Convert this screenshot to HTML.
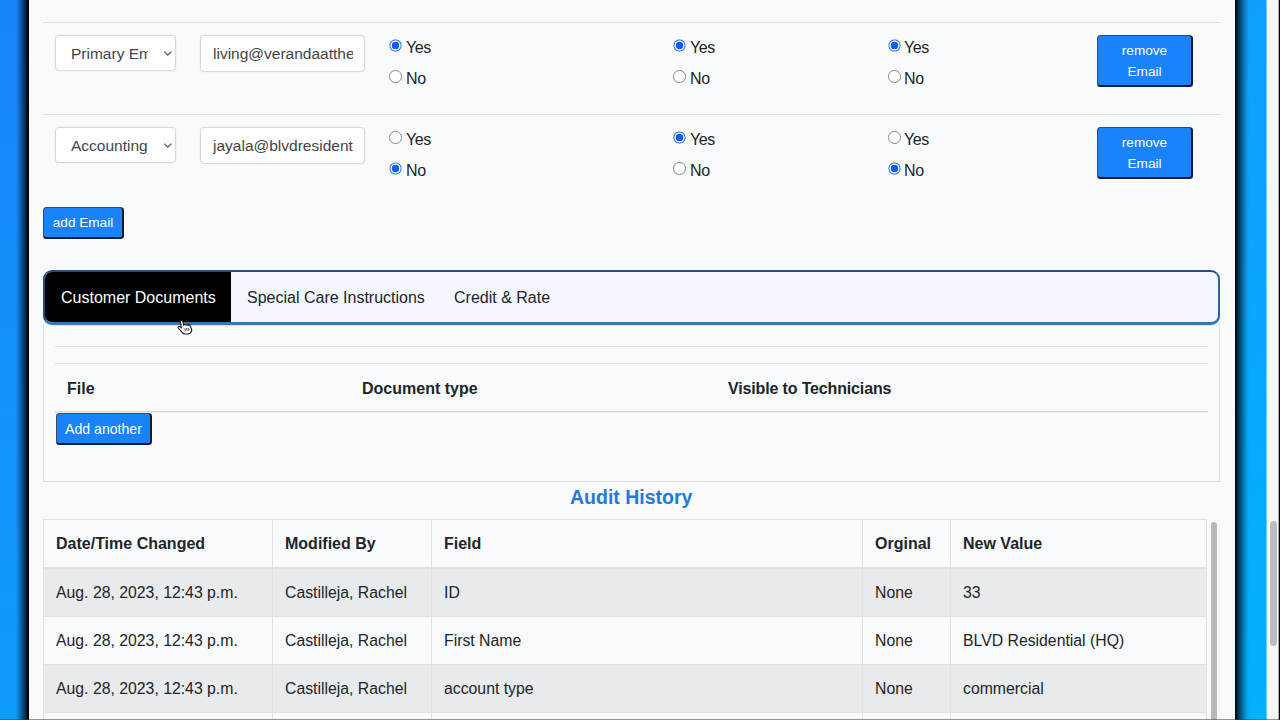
<!DOCTYPE html>
<html><head><meta charset="utf-8">
<style>
*{box-sizing:border-box;margin:0;padding:0}
html,body{width:1280px;height:720px;overflow:hidden;background:#f8fafc;font-family:"Liberation Sans",sans-serif;color:#212529}
.abs{position:absolute}
#lblue{left:0;top:0;width:29px;height:720px;background:linear-gradient(to right,rgba(0,0,0,0) 0,rgba(0,0,0,0) 16px,rgba(0,8,25,.38) 21px,rgba(0,5,20,.7) 25px,#000 28px,#000 29px),linear-gradient(to bottom,#1886fb,#0f9bf9)}
#rblue{left:1235px;top:0;width:32px;height:720px;background:linear-gradient(to right,#000 0,rgba(0,10,20,.85) 2px,rgba(0,10,25,.45) 7px,rgba(0,10,25,.08) 12px,rgba(0,0,0,0) 14px,rgba(0,0,0,0) 31px),linear-gradient(to right,rgba(190,240,255,0) 31px,#bff0ff 32px),linear-gradient(to bottom,#0f9ffb,#03b1fd)}
#rstrip{left:1267px;top:0;width:13px;height:720px;background:linear-gradient(to right,#dff6fd 0,#f7f8f6 1px,#f7f8f6 10px,#fff 11px,#9a9a9a 11.6px,#000 12.4px)}
#rstrip2{display:none}
#rthumb{left:1270px;top:521px;width:7px;height:125px;border-radius:4px;background:#bdbdbd}
.hr{height:1px;background:#dee2e6}
.sel{background:#fff;border:1px solid #d6d8da;box-shadow:0 0 1.5px rgba(0,0,0,.10);border-radius:4px;height:36px;width:121px;font-size:15.5px;color:#3f4448;overflow:hidden}
.sel span{position:absolute;left:15px;top:9px;white-space:nowrap;width:77px;overflow:hidden}
.sel svg{position:absolute;left:107px;top:14px}
.inp{background:#fff;border:1px solid #d6d8da;box-shadow:0 0 1.5px rgba(0,0,0,.10);border-radius:4px;height:37px;width:165px;font-size:15.5px;color:#3f4448;overflow:hidden}
.inp span{position:absolute;left:12px;top:9px;white-space:nowrap;width:140px;overflow:hidden}
.rad{width:12.5px;height:12.5px;border-radius:50%;border:1px solid #8a8a8a;background:#fff}
.rad.on{border:none;background:radial-gradient(circle closest-side,#0b5ef2 0,#0b5ef2 3.5px,#fff 4.1px,#fff 4.7px,#3d7ff0 5.3px,#3d7ff0 5.7px,rgba(61,127,240,.3) 6.25px)}
.rl{font-size:16px;letter-spacing:-0.4px;color:#212529;white-space:nowrap}
.btn{background:#1a82fb;color:#fff;border:1px solid #3b4a66;border-bottom:2px solid #0d1a30;border-right:2px solid #0d1a30;border-radius:3.5px;font-size:13.6px;text-align:center}
#tabs{left:43px;top:270px;width:1177px;height:55px;border:3px solid #2a64a6;border-top:2px solid #1f4f85;border-bottom-color:#3876b6;border-left:2px solid #1d4a82;border-right-width:2px;border-radius:9px;background:#f3f7fd;overflow:hidden;box-shadow:0 1px 0 #c8f2ff}
#tabact{left:0;top:0;width:186px;height:50px;background:#000}
.tab{font-size:16px;white-space:nowrap;top:17px}
#card{left:43px;top:324px;width:1177px;height:158px;border:1px solid #dcdfe3;border-top:none}
.th{font-weight:bold;font-size:16px;white-space:nowrap}
.td{font-size:15.8px;white-space:nowrap}
#audit{left:570px;top:486px;font-size:19.5px;font-weight:bold;color:#1f7ad8;white-space:nowrap}
</style></head><body>
<div id="lblue" class="abs"></div>
<div id="rblue" class="abs"></div>
<div id="rstrip" class="abs"></div>
<div id="rstrip2" class="abs"></div>
<div id="rthumb" class="abs"></div>

<!-- email rows -->
<div class="abs hr" style="left:43px;top:22px;width:1177px"></div>
<div class="abs sel" style="left:55px;top:35px"><span>Primary Em</span><svg width="10" height="7" viewBox="0 0 10 7"><path d="M1.2 1.6 L4.8 5.2 L8.4 1.6" fill="none" stroke="#555" stroke-width="1.3"/></svg></div>
<div class="abs inp" style="left:200px;top:35px"><span>living@verandaatthe</span></div>
<div class="abs rad on" style="left:389px;top:39px"></div><div class="abs rl" style="left:406px;top:39px">Yes</div>
<div class="abs rad" style="left:389px;top:70px"></div><div class="abs rl" style="left:406px;top:70px">No</div>
<div class="abs rad on" style="left:673px;top:39px"></div><div class="abs rl" style="left:690px;top:39px">Yes</div>
<div class="abs rad" style="left:673px;top:70px"></div><div class="abs rl" style="left:690px;top:70px">No</div>
<div class="abs rad on" style="left:888px;top:39px"></div><div class="abs rl" style="left:904px;top:39px">Yes</div>
<div class="abs rad" style="left:888px;top:70px"></div><div class="abs rl" style="left:904px;top:70px">No</div>
<div class="abs btn" style="left:1097px;top:35px;width:96px;height:52px;line-height:21px;padding-top:4px">remove<br>Email</div>

<div class="abs hr" style="left:43px;top:114px;width:1177px"></div>
<div class="abs sel" style="left:55px;top:127px"><span>Accounting</span><svg width="10" height="7" viewBox="0 0 10 7"><path d="M1.2 1.6 L4.8 5.2 L8.4 1.6" fill="none" stroke="#555" stroke-width="1.3"/></svg></div>
<div class="abs inp" style="left:200px;top:127px"><span>jayala@blvdresidential</span></div>
<div class="abs rad" style="left:389px;top:131px"></div><div class="abs rl" style="left:406px;top:131px">Yes</div>
<div class="abs rad on" style="left:389px;top:162px"></div><div class="abs rl" style="left:406px;top:162px">No</div>
<div class="abs rad on" style="left:673px;top:131px"></div><div class="abs rl" style="left:690px;top:131px">Yes</div>
<div class="abs rad" style="left:673px;top:162px"></div><div class="abs rl" style="left:690px;top:162px">No</div>
<div class="abs rad" style="left:888px;top:131px"></div><div class="abs rl" style="left:904px;top:131px">Yes</div>
<div class="abs rad on" style="left:888px;top:162px"></div><div class="abs rl" style="left:904px;top:162px">No</div>
<div class="abs btn" style="left:1097px;top:127px;width:96px;height:52px;line-height:21px;padding-top:4px">remove<br>Email</div>

<div class="abs btn" style="left:43px;top:207px;width:81px;height:32px;line-height:30px">add Email</div>

<!-- tabs -->
<div id="tabs" class="abs">
  <div id="tabact" class="abs"></div>
  <div class="abs tab" style="left:16px;color:#fff">Customer Documents</div>
  <div class="abs tab" style="left:202px">Special Care Instructions</div>
  <div class="abs tab" style="left:409px">Credit &amp; Rate</div>
</div>
<div id="card" class="abs"></div>
<div class="abs hr" style="left:55px;top:346px;width:1153px"></div>
<div class="abs hr" style="left:55px;top:363px;width:1153px"></div>
<div class="abs th" style="left:67px;top:380px">File</div>
<div class="abs th" style="left:362px;top:380px">Document type</div>
<div class="abs th" style="left:728px;top:380px;letter-spacing:-0.15px">Visible to Technicians</div>
<div class="abs" style="left:55px;top:411px;width:1153px;height:1px;background:#d6d9dc"></div><div class="abs" style="left:55px;top:412px;width:1153px;height:1px;background:#eceef0"></div>
<div class="abs btn" style="left:56px;top:413px;width:96px;height:32px;line-height:30px;font-size:14.1px">Add another</div>

<div id="audit" class="abs">Audit History</div>

<!-- audit table -->
<div class="abs" style="left:43px;top:519px;width:1164px;height:201px;border:1px solid #dee2e6;border-bottom:none;overflow:hidden">
  <div class="abs" style="left:0;top:48px;width:1165px;height:48px;background:#e9eaeb"></div>
  <div class="abs" style="left:0;top:144px;width:1165px;height:48px;background:#e9eaeb"></div>
  <div class="abs" style="left:0;top:47px;width:1165px;height:2px;background:#dee2e6"></div>
  <div class="abs hr" style="left:0;top:96px;width:1165px"></div>
  <div class="abs hr" style="left:0;top:144px;width:1165px"></div>
  <div class="abs hr" style="left:0;top:192px;width:1165px"></div>
  <div class="abs" style="left:228px;top:0;width:1px;height:201px;background:#dee2e6"></div>
  <div class="abs" style="left:387px;top:0;width:1px;height:201px;background:#dee2e6"></div>
  <div class="abs" style="left:818px;top:0;width:1px;height:201px;background:#dee2e6"></div>
  <div class="abs" style="left:906px;top:0;width:1px;height:201px;background:#dee2e6"></div>
</div>
<div class="abs th" style="left:56px;top:535px">Date/Time Changed</div>
<div class="abs th" style="left:285px;top:535px">Modified By</div>
<div class="abs th" style="left:444px;top:535px">Field</div>
<div class="abs th" style="left:875px;top:535px">Orginal</div>
<div class="abs th" style="left:963px;top:535px">New Value</div>

<div class="abs td" style="left:56px;top:584px">Aug. 28, 2023, 12:43 p.m.</div>
<div class="abs td" style="left:285px;top:584px">Castilleja, Rachel</div>
<div class="abs td" style="left:444px;top:584px">ID</div>
<div class="abs td" style="left:875px;top:584px">None</div>
<div class="abs td" style="left:963px;top:584px">33</div>

<div class="abs td" style="left:56px;top:632px">Aug. 28, 2023, 12:43 p.m.</div>
<div class="abs td" style="left:285px;top:632px">Castilleja, Rachel</div>
<div class="abs td" style="left:444px;top:632px">First Name</div>
<div class="abs td" style="left:875px;top:632px">None</div>
<div class="abs td" style="left:963px;top:632px">BLVD Residential (HQ)</div>

<div class="abs td" style="left:56px;top:680px">Aug. 28, 2023, 12:43 p.m.</div>
<div class="abs td" style="left:285px;top:680px">Castilleja, Rachel</div>
<div class="abs td" style="left:444px;top:680px">account type</div>
<div class="abs td" style="left:875px;top:680px">None</div>
<div class="abs td" style="left:963px;top:680px">commercial</div>

<!-- table scrollbar -->
<div class="abs" style="left:1211px;top:522px;width:6px;height:200px;border-radius:4px;background:#b8b8b8"></div>
<div class="abs" style="left:1219px;top:519px;width:1px;height:201px;background:#eceef0"></div>

<!-- bottom line -->
<div class="abs" style="left:0;top:719px;width:1280px;height:1px;background:rgba(60,60,60,.55)"></div>

<!-- cursor -->
<svg class="abs" style="left:174px;top:316px" width="24" height="22" viewBox="0 0 24 22">
<path d="M6.4 5.4 C6.3 4.1 8.4 3.9 8.7 5.1 L9.7 9.1 C10.2 8.3 11.5 8.3 11.9 9.1 C12.4 8.4 13.6 8.5 14 9.3 C14.5 8.7 15.7 8.8 16.2 9.7 L17.6 13.4 C18 15.4 16.8 17.6 14.4 17.9 L10.6 18 C9.6 18 8.9 17.5 8.3 16.7 L4.3 12 C3.5 10.9 4.7 9.7 5.8 10.6 L7.3 11.9 Z" fill="#fff" stroke="#1a1a1a" stroke-width="1.15" stroke-linejoin="round"/>
<path d="M11 12.2 L11.3 15.3 M12.8 12 L13.1 15.1 M14.6 12 L14.9 14.9" stroke="#444" stroke-width="0.95"/>
</svg>
</body></html>
